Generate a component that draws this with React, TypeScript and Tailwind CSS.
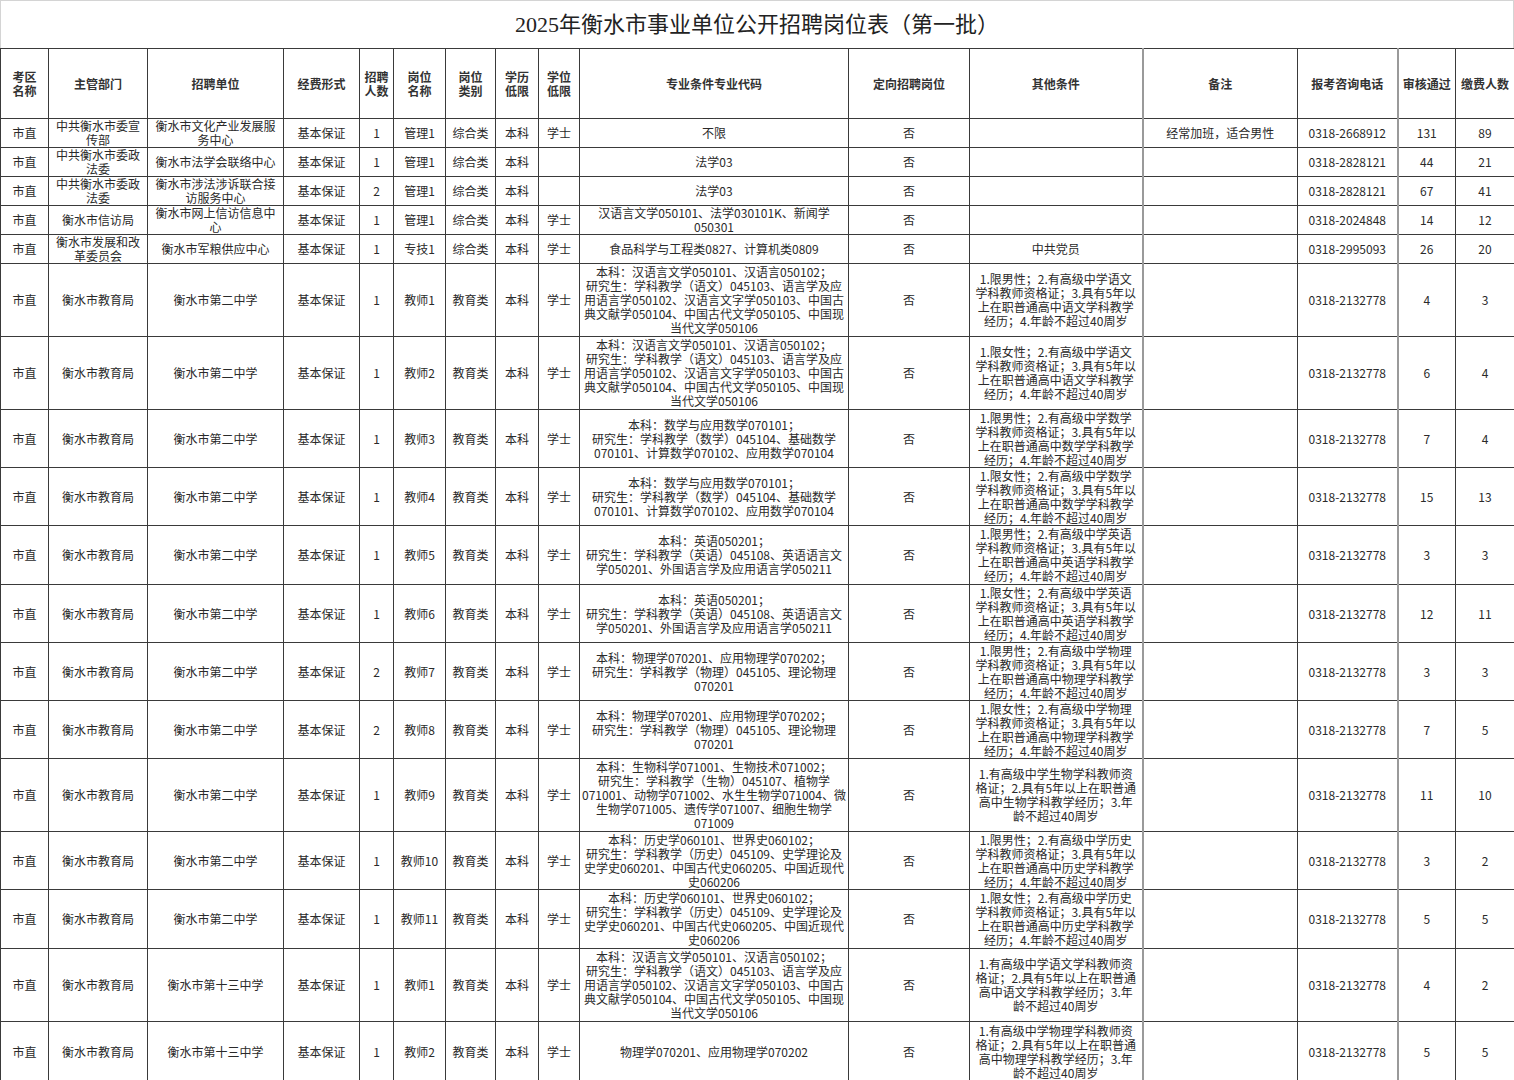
type Cell = string | string[];

type Row = {
  h: string;
  cells: Cell[];
};

const cols = [
  'w-[48px]',
  'w-[99px]',
  'w-[136px]',
  'w-[76px]',
  'w-[34px]',
  'w-[52px]',
  'w-[50px]',
  'w-[43px]',
  'w-[41px]',
  'w-[269px]',
  'w-[121px]',
  'w-[173px]',
  'w-[155px]',
  'w-[100px]',
  'w-[58px]',
  'w-[59px]',
];

const headers: Cell[] = [
  ['考区', '名称'],
  '主管部门',
  '招聘单位',
  '经费形式',
  ['招聘', '人数'],
  ['岗位', '名称'],
  ['岗位', '类别'],
  ['学历', '低限'],
  ['学位', '低限'],
  '专业条件专业代码',
  '定向招聘岗位',
  '其他条件',
  '备注',
  '报考咨询电话',
  '审核通过',
  '缴费人数',
];

const yuwen = [
  '本科：汉语言文学050101、汉语言050102；',
  '研究生：学科教学（语文）045103、语言学及应',
  '用语言学050102、汉语言文字学050103、中国古',
  '典文献学050104、中国古代文学050105、中国现',
  '当代文学050106',
];

const shuxue = [
  '本科：数学与应用数学070101；',
  '研究生：学科教学（数学）045104、基础数学',
  '070101、计算数学070102、应用数学070104',
];

const yingyu = [
  '本科：英语050201；',
  '研究生：学科教学（英语）045108、英语语言文',
  '学050201、外国语言学及应用语言学050211',
];

const wuli = [
  '本科：物理学070201、应用物理学070202；',
  '研究生：学科教学（物理）045105、理论物理',
  '070201',
];

const lishi = [
  '本科：历史学060101、世界史060102；',
  '研究生：学科教学（历史）045109、史学理论及',
  '史学史060201、中国古代史060205、中国近现代',
  '史060206',
];

const shengwu = [
  '本科：生物科学071001、生物技术071002；',
  '研究生：学科教学（生物）045107、植物学',
  '071001、动物学071002、水生生物学071004、微',
  '生物学071005、遗传学071007、细胞生物学',
  '071009',
];

const other = (sex: string, subj: string) => [
  `1.限${sex}性；2.有高级中学${subj}`,
  '学科教师资格证；3.具有5年以',
  `上在职普通高中${subj}学科教学`,
  '经历；4.年龄不超过40周岁',
];

const other3 = (subj: string) => [
  `1.有高级中学${subj}学科教师资`,
  '格证；2.具有5年以上在职普通',
  `高中${subj}学科教学经历；3.年`,
  '龄不超过40周岁',
];

const teacher = (
  h: string,
  school: string,
  n: string,
  post: string,
  major: Cell,
  cond: Cell,
  pass: string,
  paid: string,
): Row => ({
  h,
  cells: ['市直', '衡水市教育局', school, '基本保证', n, post, '教育类', '本科', '学士', major, '否', cond, '', '0318-2132778', pass, paid],
});

const rows: Row[] = [
  {
    h: 'h-[28px]',
    cells: ['市直', ['中共衡水市委宣', '传部'], ['衡水市文化产业发展服', '务中心'], '基本保证', '1', '管理1', '综合类', '本科', '学士', '不限', '否', '', '经常加班，适合男性', '0318-2668912', '131', '89'],
  },
  {
    h: 'h-[29px]',
    cells: ['市直', ['中共衡水市委政', '法委'], '衡水市法学会联络中心', '基本保证', '1', '管理1', '综合类', '本科', '', '法学03', '否', '', '', '0318-2828121', '44', '21'],
  },
  {
    h: 'h-[29px]',
    cells: ['市直', ['中共衡水市委政', '法委'], ['衡水市涉法涉诉联合接', '访服务中心'], '基本保证', '2', '管理1', '综合类', '本科', '', '法学03', '否', '', '', '0318-2828121', '67', '41'],
  },
  {
    h: 'h-[29px]',
    cells: ['市直', '衡水市信访局', ['衡水市网上信访信息中', '心'], '基本保证', '1', '管理1', '综合类', '本科', '学士', ['汉语言文学050101、法学030101K、新闻学', '050301'], '否', '', '', '0318-2024848', '14', '12'],
  },
  {
    h: 'h-[29px]',
    cells: ['市直', ['衡水市发展和改', '革委员会'], '衡水市军粮供应中心', '基本保证', '1', '专技1', '综合类', '本科', '学士', '食品科学与工程类0827、计算机类0809', '否', '中共党员', '', '0318-2995093', '26', '20'],
  },
  teacher('h-[73px]', '衡水市第二中学', '1', '教师1', yuwen, other('男', '语文'), '4', '3'),
  teacher('h-[73px]', '衡水市第二中学', '1', '教师2', yuwen, other('女', '语文'), '6', '4'),
  teacher('h-[58px]', '衡水市第二中学', '1', '教师3', shuxue, other('男', '数学'), '7', '4'),
  teacher('h-[58px]', '衡水市第二中学', '1', '教师4', shuxue, other('女', '数学'), '15', '13'),
  teacher('h-[59px]', '衡水市第二中学', '1', '教师5', yingyu, other('男', '英语'), '3', '3'),
  teacher('h-[58px]', '衡水市第二中学', '1', '教师6', yingyu, other('女', '英语'), '12', '11'),
  teacher('h-[58px]', '衡水市第二中学', '2', '教师7', wuli, other('男', '物理'), '3', '3'),
  teacher('h-[58px]', '衡水市第二中学', '2', '教师8', wuli, other('女', '物理'), '7', '5'),
  teacher('h-[73px]', '衡水市第二中学', '1', '教师9', shengwu, other3('生物'), '11', '10'),
  teacher('h-[58px]', '衡水市第二中学', '1', '教师10', lishi, other('男', '历史'), '3', '2'),
  teacher('h-[59px]', '衡水市第二中学', '1', '教师11', lishi, other('女', '历史'), '5', '5'),
  teacher('h-[73px]', '衡水市第十三中学', '1', '教师1', yuwen, other3('语文'), '4', '2'),
  teacher('h-[60px]', '衡水市第十三中学', '1', '教师2', '物理学070201、应用物理学070202', other3('物理'), '5', '5'),
];

function Lines({ value }: { value: Cell }) {
  const lines = Array.isArray(value) ? value : [value];
  return (
    <>
      {lines.map((line, i) => (
        <div key={i} className="whitespace-nowrap">
          {line}
        </div>
      ))}
    </>
  );
}

// the 备注 and 审核通过 columns carry a thicker grey rule on their left
const edge = (i: number) =>
  i === 12 || i === 14 ? 'border-l-2 border-l-[#9a9a9a]' : '';

export default function App() {
  return (
    <div className="w-[1514px] bg-white font-['Noto_Sans_CJK_SC','Liberation_Sans',sans-serif] text-[#2a2a2a]">
      <div className="flex h-[48px] items-center justify-center border border-b-0 border-[#d4d4d4] font-['Liberation_Serif','Noto_Sans_CJK_SC',serif] text-[22px] text-[#222]">
        2025年衡水市事业单位公开招聘岗位表（第一批）
      </div>
      <table className="w-[1514px] table-fixed border-collapse text-[12px] leading-[14px]">
        <colgroup>
          {cols.map((w, i) => (
            <col key={i} className={w} />
          ))}
        </colgroup>
        <thead>
          <tr className="h-[70px]">
            {headers.map((h, i) => (
              <th
                key={i}
                className={`overflow-hidden border border-[#3a3a3a] px-[1px] text-center align-middle font-semibold text-[#333] ${edge(i)}`}
              >
                <Lines value={h} />
              </th>
            ))}
          </tr>
        </thead>
        <tbody>
          {rows.map((row, r) => (
            <tr key={r} className={row.h}>
              {row.cells.map((c, i) => (
                <td
                  key={i}
                  className={`overflow-hidden border border-[#3a3a3a] p-0 text-center align-middle ${edge(i)}`}
                >
                  <Lines value={c} />
                </td>
              ))}
            </tr>
          ))}
        </tbody>
      </table>
    </div>
  );
}
